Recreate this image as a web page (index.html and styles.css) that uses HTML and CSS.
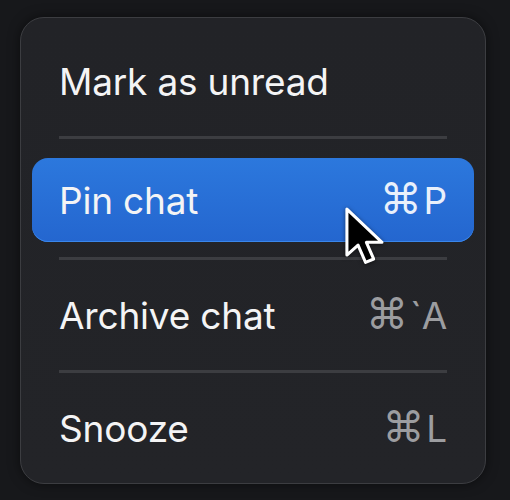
FILE: index.html
```html
<!DOCTYPE html>
<html lang="en">
<head>
    <meta charset="UTF-8">
    <meta name="viewport" content="width=device-width, initial-scale=1.0">
    <title>Context menu</title>
    <link rel="stylesheet" href="styles.css">
</head>
<body>
    <div class="menu">
        <div class="item">
            <span class="label">Mark as unread</span>
        </div>
        <div class="sep"></div>
        <div class="item active">
            <span class="label">Pin chat</span>
            <span class="keys"><span class="cmd">⌘</span>P</span>
            <svg class="cursor" width="48" height="64" viewBox="0 0 17 23">
                <path d="M2 1.5 L2 18 L6 14.4 L8.7 20.6 L11.6 19.4 L9 13.4 L14.6 13.4 Z"
                      fill="#000" stroke="#fff" stroke-width="1.1" stroke-linejoin="round"/>
            </svg>
        </div>
        <div class="sep"></div>
        <div class="item">
            <span class="label">Archive chat</span>
            <span class="keys"><span class="cmd">⌘</span>`A</span>
        </div>
        <div class="sep"></div>
        <div class="item">
            <span class="label">Snooze</span>
            <span class="keys"><span class="cmd">⌘</span>L</span>
        </div>
    </div>
</body>
</html>
```
FILE: styles.css
```css
*,
*::after,
*::before{
    box-sizing: border-box;
    margin: 0;
    padding: 0;
}
body{
    width: 510px;
    height: 500px;
    background-color: #17181b;
    font-family: Inter, "Noto Sans", sans-serif;
    padding: 17px 24px 0 20px;
}
.menu{
    display: flex;
    flex-direction: column;
    width: 466px;
    height: 467px;
    background: linear-gradient(#222327, #232428);
    border: 1px solid #3c3d41;
    border-radius: 24px;
    padding: 22px 11px 0 11px;
    box-shadow: 0 0 12px rgba(0, 0, 0, 0.5);
}
.item{
    position: relative;
    flex: none;
    height: 82px;
    display: flex;
    align-items: center;
    justify-content: space-between;
    padding: 0 27px 0 27px;
    color: #f4f4f5;
    font-size: 37px;
    letter-spacing: -0.2px;
}
/* la fila activa es un poco mas alta que las demas */
.item.active{
    height: 84px;
    margin: 5px 0 1px;
    background: linear-gradient(#2c78dd, #2466cf);
    border-radius: 16px;
    box-shadow: inset 0 -1px 0 #3a86ea;
}
.keys{
    color: #9c9da0;
    display: flex;
    align-items: center;
    gap: 2px;
}
.active .keys{
    color: #e9f0fb;
}
.cmd{
    font-family: "DejaVu Sans", sans-serif;
    font-size: 42px;
    line-height: 1;
}
.sep{
    flex: none;
    height: 3px;
    background-color: #3c3d41;
    margin: 14px 27px;
}
.cursor{
    position: absolute;
    left: 309px;
    top: 47px;
    filter: drop-shadow(0 1px 2px rgba(0, 0, 0, 0.5));
}
```
